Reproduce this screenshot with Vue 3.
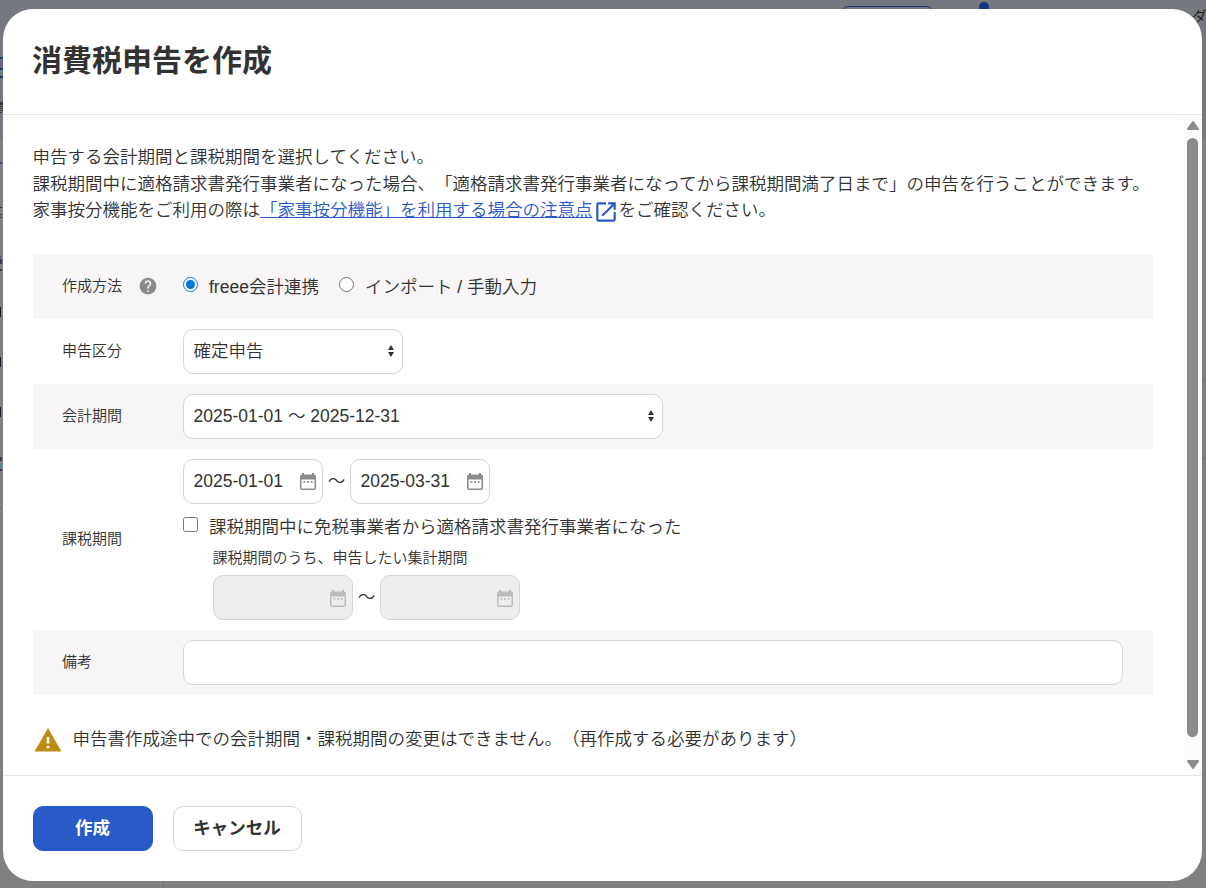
<template>
  <div class="page">
    <div class="page-top"></div>
    <span class="bg-button"></span>
    <span class="bg-dot"></span>
    <span class="bg-text">ダ</span>
    <span
      v-for="(m, index) in edgeMarks"
      :key="index"
      class="bg-mark"
      :style="{ top: m.top + 'px', height: m.height + 'px', width: m.width + 'px', background: m.color }"
    ></span>
    <span class="bg-line"></span>
    <span class="bg-rule"></span>

    <div class="dialog">
      <header class="dialog-header">
        <h2>消費税申告を作成</h2>
      </header>

      <div class="dialog-main">
        <div class="content">
          <p class="lead">
            申告する会計期間と課税期間を選択してください。<br />
            課税期間中に適格請求書発行事業者になった場合、「適格請求書発行事業者になってから課税期間満了日まで」の申告を行うことができます。<br />
            家事按分機能をご利用の際は<a href="#" @click.prevent>「家事按分機能」を利用する場合の注意点<svg class="icon-link" viewBox="0 0 24 24"><path d="M19 19H5V5h7V3H5a2 2 0 0 0-2 2v14a2 2 0 0 0 2 2h14c1.100 0 2-.9 2-2v-7h-2v7zM14 3v2h3.590l-9.830 9.830 1.410 1.410L19 6.410V10h2V3h-7z" /></svg></a>をご確認ください。
          </p>

          <form class="form" @submit.prevent>
            <div class="row gray">
              <div class="label">
                作成方法
                <svg class="icon-help" viewBox="0 0 24 24"><path d="M12 2C6.480 2 2 6.480 2 12s4.480 10 10 10 10-4.480 10-10S17.520 2 12 2zm1 17h-2v-2h2v2zm2.070-7.750l-.9.920C13.450 12.900 13 13.500 13 15h-2v-.5c0-1.100.450-2.100 1.170-2.830l1.240-1.260c.370-.36.590-.86.590-1.410 0-1.100-.9-2-2-2s-2 .9-2 2H8c0-2.210 1.790-4 4-4s4 1.790 4 4c0 .88-.36 1.680-.93 2.250z" /></svg>
              </div>
              <div class="field radios">
                <label><input type="radio" value="link" v-model="form.method" /><span>freee会計連携</span></label>
                <label><input type="radio" value="import" v-model="form.method" /><span>インポート / 手動入力</span></label>
              </div>
            </div>

            <div class="row">
              <div class="label">申告区分</div>
              <div class="field">
                <div class="select small">
                  <select v-model="form.type">
                    <option>確定申告</option>
                  </select>
                  <svg viewBox="0 0 6 12"><path d="M0 5L3 0l3 5zM0 7h6l-3 5z" /></svg>
                </div>
              </div>
            </div>

            <div class="row gray">
              <div class="label">会計期間</div>
              <div class="field">
                <div class="select">
                  <select v-model="form.period">
                    <option>2025-01-01 ～ 2025-12-31</option>
                  </select>
                  <svg viewBox="0 0 6 12"><path d="M0 5L3 0l3 5zM0 7h6l-3 5z" /></svg>
                </div>
              </div>
            </div>

            <div class="row">
              <div class="label">課税期間</div>
              <div class="field">
                <div class="range">
                  <div class="date">
                    <input type="text" v-model="form.from" />
                    <svg viewBox="0 0 16 17"><path fill-rule="evenodd" :d="calendarPath" /></svg>
                  </div>
                  <span class="tilde">～</span>
                  <div class="date">
                    <input type="text" v-model="form.to" />
                    <svg viewBox="0 0 16 17"><path fill-rule="evenodd" :d="calendarPath" /></svg>
                  </div>
                </div>
                <label class="check"><input type="checkbox" v-model="form.becameInvoice" /><span>課税期間中に免税事業者から適格請求書発行事業者になった</span></label>
                <div class="sub">
                  <p>課税期間のうち、申告したい集計期間</p>
                  <div class="range">
                    <div class="date" :class="{ disabled: !form.becameInvoice }">
                      <input type="text" v-model="form.subFrom" :disabled="!form.becameInvoice" />
                      <svg viewBox="0 0 16 17"><path fill-rule="evenodd" :d="calendarPath" /></svg>
                    </div>
                    <span class="tilde">～</span>
                    <div class="date" :class="{ disabled: !form.becameInvoice }">
                      <input type="text" v-model="form.subTo" :disabled="!form.becameInvoice" />
                      <svg viewBox="0 0 16 17"><path fill-rule="evenodd" :d="calendarPath" /></svg>
                    </div>
                  </div>
                </div>
              </div>
            </div>

            <div class="row gray">
              <div class="label">備考</div>
              <div class="field">
                <input class="memo" type="text" v-model="form.memo" />
              </div>
            </div>
          </form>

          <div class="warning">
            <svg viewBox="0 0 28 24"><path d="M14 0L0.500 23.500h27zM12.700 9h2.600v6.500h-2.600zM12.700 17.700h2.600v2.500h-2.600z" fill-rule="evenodd" /></svg>
            <span>申告書作成途中での会計期間・課税期間の変更はできません。（再作成する必要があります）</span>
          </div>
        </div>

        <div class="scrollbar">
          <svg viewBox="0 0 14 11"><path d="M7 2l5 7H2z" /></svg>
          <div class="thumb"></div>
          <svg viewBox="0 0 14 11"><path d="M7 9l5-7H2z" /></svg>
        </div>
      </div>

      <footer class="dialog-footer">
        <button class="btn primary">作成</button>
        <button class="btn">キャンセル</button>
      </footer>
    </div>
  </div>
</template>

<script setup>
import { ref } from 'vue'

const form = ref({
  method: 'link',
  type: '確定申告',
  period: '2025-01-01 ～ 2025-12-31',
  from: '2025-01-01',
  to: '2025-03-31',
  becameInvoice: false,
  subFrom: '',
  subTo: '',
  memo: ''
})

const calendarPath =
  'M2 0h2v1.500h8V0h2v1.500q2 0 2 2V15q0 2-2 2H2q-2 0-2-2V3.500q0-2 2-2zM1.500 6.500V15.500h13V6.500zM3.500 8h1.800v1.800h-1.800zM7.100 8h1.800v1.800H7.100zM10.700 8h1.800v1.800h-1.800z'

// page content that stays visible left of the dialog
const edgeMarks = [
  { top: 57, height: 2, width: 3, color: '#183a78' },
  { top: 60, height: 8, width: 3, color: '#6c6088' },
  { top: 68, height: 2, width: 3, color: '#183a78' },
  { top: 76, height: 2, width: 3, color: '#183a78' },
  { top: 102, height: 3, width: 3, color: '#33353b' },
  { top: 106, height: 1, width: 3, color: '#33353b' },
  { top: 108, height: 1, width: 3, color: '#33353b' },
  { top: 110, height: 1, width: 3, color: '#33353b' },
  { top: 112, height: 1, width: 2, color: '#33353b' },
  { top: 162, height: 2, width: 2, color: '#2c4690' },
  { top: 207, height: 1, width: 2, color: '#33353b' },
  { top: 214, height: 1, width: 2, color: '#33353b' },
  { top: 217, height: 1, width: 2, color: '#33353b' },
  { top: 256, height: 2, width: 1, color: '#3a4a80' },
  { top: 259, height: 5, width: 2, color: '#3a3c50' },
  { top: 269, height: 2, width: 2, color: '#2c4450' },
  { top: 307, height: 10, width: 1, color: '#25152a' },
  { top: 357, height: 10, width: 1, color: '#25152a' },
  { top: 407, height: 10, width: 1, color: '#25152a' },
  { top: 457, height: 4, width: 2, color: '#3c4252' },
  { top: 463, height: 5, width: 1, color: '#4c8298' },
  { top: 469, height: 2, width: 2, color: '#3c3c42' },
  { top: 507, height: 1, width: 1, color: '#3c5f80' }
]
</script>

<style>
body {
  margin: 0;
  overflow: hidden;
}
</style>

<style scoped>
* {
  box-sizing: border-box;
}

.page {
  position: relative;
  width: 1206px;
  height: 888px;
  padding: 9px 4px 7px 3px;
  overflow: hidden;
  background: #808080;
  color: #323232;
  font-family: "Liberation Sans", "Noto Sans CJK JP", sans-serif;
  font-size: 17.5px;
  font-weight: 350;
  text-spacing-trim: space-all;
}

.page-top {
  position: absolute;
  top: 0;
  left: 0;
  right: 0;
  height: 139px;
  background: #767880;
}

.bg-button {
  position: absolute;
  top: 6px;
  left: 842px;
  width: 91px;
  height: 30px;
  border: 1px solid #173a7e;
  border-radius: 6px;
}

.bg-dot {
  position: absolute;
  top: 2px;
  left: 979px;
  width: 10px;
  height: 10px;
  border-radius: 50%;
  background: #143680;
}

.bg-text {
  position: absolute;
  top: 7px;
  left: 1192px;
  font-size: 15px;
  line-height: 20px;
  color: #191919;
}

.bg-mark {
  position: absolute;
  left: 0;
}

.bg-line {
  position: absolute;
  top: 880px;
  left: 163px;
  width: 1px;
  height: 8px;
  background: #727272;
}

.bg-rule {
  position: absolute;
  top: 379px;
  right: 0;
  width: 4px;
  height: 80px;
  border: solid #747474;
  border-width: 1px 0;
}

.dialog {
  position: relative;
  display: flex;
  flex-direction: column;
  height: 872px;
  border-radius: 30px;
  background: #fff;
  overflow: hidden;
}

.dialog-header {
  height: 106px;
  padding: 29px 29px 0;
  border-bottom: 1px solid #e9e7e7;
}

.dialog-header h2 {
  margin: 0;
  font-size: 30px;
  line-height: 45px;
}

.dialog-main {
  display: flex;
  height: 660px;
}

.content {
  flex: 1;
  padding: 29px 30px 0;
}

.lead {
  height: 80px;
  margin: 0 0 0 -0.5px;
  line-height: 26.5px;
  white-space: nowrap;
}

.lead a {
  color: #285ac8;
  text-decoration: underline;
}

.icon-link {
  width: 26px;
  height: 26px;
  margin: -6px 0 -2px;
  vertical-align: -7px;
  fill: #285ac8;
}

.form {
  width: 1120px;
  margin-top: 30px;
}

.row {
  display: flex;
  align-items: center;
  padding: 10px 30px;
}

.gray {
  background: #f7f5f6;
}

.label {
  display: flex;
  align-items: center;
  justify-content: space-between;
  width: 96px;
  margin: 0 25px 0 -1px;
  padding-bottom: 5px;
  font-size: 15px;
}

.field {
  flex: 1;
}

.icon-help {
  width: 20px;
  height: 20px;
  margin-bottom: -3px;
  fill: #8c8989;
}

.radios {
  display: flex;
  gap: 20px;
  height: 45px;
  align-items: center;
}

.radios label {
  display: flex;
  align-items: center;
  padding-bottom: 3px;
}

.check {
  display: flex;
  align-items: center;
  height: 45px;
  padding-bottom: 3px;
}

input[type='radio'],
input[type='checkbox'] {
  width: 15px;
  height: 15px;
  margin: 0 11px 1px 0;
  accent-color: #0078d7;
}

.select {
  position: relative;
  width: 480px;
}

.small {
  width: 220px;
}

.select select,
.date input,
.memo {
  display: block;
  width: 100%;
  height: 45px;
  padding: 0 9.5px 1px;
  border: 1px solid #d7d5d5;
  border-radius: 10px;
  background: #fff;
  color: #323232;
  font: inherit;
  appearance: none;
}

.select svg {
  position: absolute;
  right: 9px;
  top: 16px;
  width: 6px;
  height: 12px;
  fill: #323232;
}

.range {
  display: flex;
  align-items: center;
}

.tilde {
  width: 27px;
  padding-bottom: 4px;
  text-align: center;
}

.date {
  position: relative;
  width: 140px;
}

.date svg {
  position: absolute;
  right: 7px;
  top: 14px;
  width: 16px;
  height: 17px;
  fill: #8c8989;
}

.sub {
  margin-left: 30px;
}

.sub p {
  margin: 0 0 0 -0.5px;
  padding-bottom: 9px;
  font-size: 15px;
  line-height: 17px;
}

.date.disabled input {
  background: #f0eeed;
}

.date.disabled svg {
  top: 15px;
  fill: #bebcbb;
}

.warning {
  display: flex;
  align-items: center;
  margin-top: 29px;
  white-space: nowrap;
}

.warning svg {
  width: 28px;
  height: 24px;
  margin: 4px 10.5px 0 1px;
  fill: #be8c14;
}

.warning span {
  padding-bottom: 1px;
}

.scrollbar {
  display: flex;
  flex-direction: column;
  align-items: center;
  width: 19px;
  padding: 5px 0 5px;
  background: #fcfcfc;
}

.scrollbar svg {
  width: 14px;
  height: 11px;
  fill: #8b8b8b;
  stroke: #8b8b8b;
  stroke-width: 2;
  stroke-linejoin: round;
}

.thumb {
  width: 11px;
  height: 599px;
  margin: 7px 0 22px;
  border-radius: 6px;
  background: #8b8b8b;
}

.dialog-footer {
  display: flex;
  gap: 20px;
  flex: 1;
  padding: 30px;
  border-top: 1px solid #e9e7e7;
}

.btn {
  width: 129px;
  height: 45px;
  padding: 0 1px 4px 0;
  border: 1px solid #d7d5d5;
  border-radius: 10px;
  background: #fff;
  color: #323232;
  font: inherit;
  font-weight: bold;
}

.primary {
  width: 120px;
  border-color: #285ac8;
  background: #285ac8;
  color: #fff;
}
</style>
